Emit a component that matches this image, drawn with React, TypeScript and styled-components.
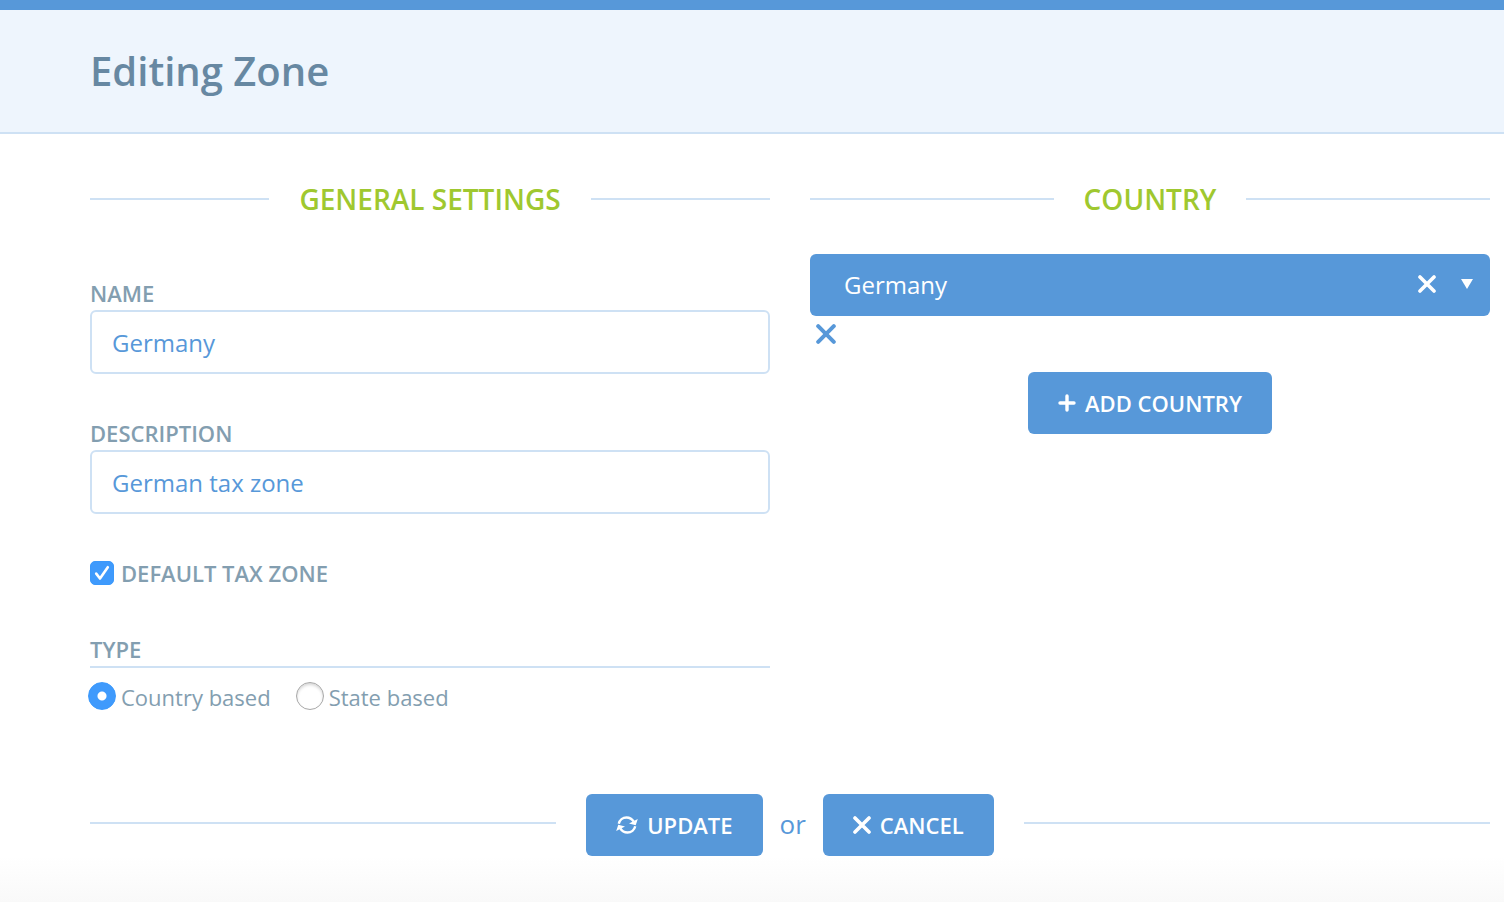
import React, { useState } from "react";
import styled, { createGlobalStyle, css } from "styled-components";

const blue = "#5798d9";
const line = "#cee1f4";
const slate = "#839eb0";
const green = "#9fc82f";

const GlobalStyle = createGlobalStyle`
  *, *::before, *::after { box-sizing: border-box; }
  body {
    margin: 0;
    background: #fff;
    color: ${slate};
    font-family: "Open Sans", "Noto Sans", sans-serif;
    font-size: 24px;
    line-height: 32px;
  }
  button, input, select { font: inherit; }
`;

const Page = styled.div`
  display: flex;
  flex-direction: column;
  min-height: 100vh;
`;

const Header = styled.header`
  padding: 32px 90px;
  background: #eef5fd;
  border-top: 10px solid ${blue};
  border-bottom: 2px solid ${line};
`;

const Title = styled.h1`
  margin: 0;
  color: #6788a2;
  font-size: 40px;
  line-height: 58px;
  font-weight: 600;
`;

const Form = styled.form`
  padding: 44px 14px 0 90px;
`;

const Columns = styled.div`
  display: grid;
  grid-template-columns: 1fr 1fr;
  column-gap: 40px;
`;

const SectionTitle = styled.h2`
  display: flex;
  align-items: center;
  gap: 30px;
  margin: 0;
  color: ${green};
  font-size: 28px;
  line-height: 42px;
  font-weight: 600;
  text-transform: uppercase;

  &::before,
  &::after {
    content: "";
    flex: 1;
    height: 2px;
    background: ${line};
  }
`;

const labelText = css`
  color: ${slate};
  font-size: 22px;
  line-height: 30px;
  font-weight: 600;
  text-transform: uppercase;
`;

const Fields = styled.div`
  display: flex;
  flex-direction: column;
  gap: 44px;
  padding-top: 58px;
`;

const Field = styled.div`
  display: flex;
  flex-direction: column;
`;

const Label = styled.label`
  ${labelText}
  padding-bottom: 2px;
`;

const TextInput = styled.input`
  width: 100%;
  height: 64px;
  padding: 0 20px;
  border: 2px solid ${line};
  border-radius: 6px;
  background: #fff;
  color: ${blue};
  outline: none;
`;

const CheckLabel = styled.label`
  ${labelText}
  display: flex;
  align-items: center;
  gap: 7px;
  padding-bottom: 2px;
`;

const Tick = styled.span`
  display: grid;
  height: 24px;

  > * { grid-area: 1 / 1; }
  svg { pointer-events: none; }
`;

const Checkbox = styled.input`
  appearance: none;
  width: 24px;
  height: 24px;
  margin: 0;
  border: 1px solid #b4b4b4;
  border-radius: 5px;

  &:checked { border-color: #3b99fc; background: #3f9afc; }
  &:not(:checked) + svg { visibility: hidden; }
`;

const RadioGroup = styled.fieldset`
  display: block;
  min-width: 0;
  margin: 0;
  padding: 0;
  border: 0;
`;

const RadioLegend = styled.legend`
  ${labelText}
  width: 100%;
  padding: 0 0 2px;
  border-bottom: 2px solid ${line};
`;

const Radios = styled.div`
  display: flex;
  gap: 25px;
  margin-left: -2px;
  padding-top: 13px;
`;

const RadioLabel = styled.label`
  display: flex;
  align-items: center;
  gap: 5px;
  font-size: 22px;
`;

const Radio = styled.input`
  appearance: none;
  width: 28px;
  height: 28px;
  margin: 0 0 2px;
  border: 1px solid #a8a8a8;
  border-radius: 50%;
  background: #fff;
  box-shadow: inset 0 2px 3px #d8d8d8;

  &:checked {
    border-color: #3b99fc;
    background: radial-gradient(circle, #fff 4px, #3f9afc 5px);
    box-shadow: none;
  }
`;

const CountryList = styled.div`
  display: flex;
  flex-direction: column;
  padding-top: 34px;
`;

const SelectBox = styled.div`
  display: grid;
  grid-template-columns: 1fr auto auto;
  align-items: center;
  height: 62px;
  border-radius: 6px;
  background: ${blue};
  color: #fff;
`;

const Select = styled.select`
  grid-area: 1 / 1 / 2 / 4;
  width: 100%;
  height: 62px;
  padding: 0 100px 0 34px;
  border: 0;
  border-radius: 6px;
  background: transparent;
  color: #fff;
  appearance: none;
  outline: none;
`;

const IconButton = styled.button`
  display: flex;
  padding: 8px 6px;
  border: 0;
  background: none;
  color: ${blue};
  cursor: pointer;
`;

const ClearButton = styled(IconButton)`
  grid-row: 1;
  grid-column: 2;
  padding: 6px 6px 8px;
  color: #fff;
`;

const RemoveButton = styled(IconButton)`
  align-self: flex-start;
`;

const Arrow = styled.svg`
  grid-row: 1;
  grid-column: 3;
  margin: 0 17px 2px 19px;
  pointer-events: none;
`;

const Button = styled.button`
  display: flex;
  align-items: center;
  justify-content: center;
  gap: 9px;
  height: 62px;
  padding: 0 30px;
  border: 0;
  border-radius: 6px;
  background: ${blue};
  color: #fff;
  font-size: 22px;
  font-weight: 600;
  line-height: 32px;
  text-transform: uppercase;
  cursor: pointer;
`;

const AddRow = styled.div`
  display: flex;
  justify-content: center;
  padding-top: 20px;
`;

const Actions = styled.div`
  display: flex;
  align-items: center;
  padding-top: 81px;

  &::before,
  &::after {
    content: "";
    flex: 1;
    height: 2px;
    margin: 0 30px 4px 0;
    background: ${line};
  }
  &::after { margin: 0 0 4px 30px; }
`;

const Or = styled.span`
  padding: 0 17px 2px;
  color: ${blue};
  font-size: 26px;
`;

const BottomShade = styled.div`
  flex: 1;
  min-height: 46px;
  background: linear-gradient(#fff, #f9f9f9);
`;

const Cross = ({ size }: { size: number }) => (
  <svg width={size} height={size} viewBox="0 0 20 20" fill="none" stroke="currentColor" strokeWidth="4" strokeLinecap="round" aria-hidden="true">
    <path d="M2.2 2.2 17.8 17.8M17.8 2.2 2.2 17.8" />
  </svg>
);

const Plus = () => (
  <svg width="18" height="18" viewBox="0 0 18 18" fill="none" stroke="currentColor" strokeWidth="3.4" strokeLinecap="round" aria-hidden="true">
    <path d="M9 2V16M2 9H16" />
  </svg>
);

const Refresh = () => (
  <svg width="22" height="18" viewBox="0 0 22 18" aria-hidden="true">
    <g fill="none" stroke="currentColor" strokeWidth="2.4">
      <path d="M2.8 7.800C3.6 4 6.800 1.500 10.500 1.500c3 0 5.700 1.600 7.200 4.200" />
      <path d="M19.200 10.200C18.400 14 15.200 16.500 11.500 16.500c-3 0-5.700-1.600-7.200-4.200" />
    </g>
    <path fill="currentColor" d="M21.800 2.900 19.700 9.200 13 7.400Z" />
    <path fill="currentColor" d="M.2 15.100 2.300 8.800 9 10.600Z" />
  </svg>
);

export default function App() {
  const [name, setName] = useState("Germany");
  const [description, setDescription] = useState("German tax zone");
  const [isDefault, setIsDefault] = useState(true);
  const [kind, setKind] = useState("country");

  return (
    <Page>
      <GlobalStyle />
      <Header>
        <Title>Editing Zone</Title>
      </Header>
      <Form onSubmit={(e) => e.preventDefault()}>
        <Columns>
          <section>
            <SectionTitle>General Settings</SectionTitle>
            <Fields>
              <Field>
                <Label htmlFor="zone-name">Name</Label>
                <TextInput id="zone-name" value={name} onChange={(e) => setName(e.target.value)} />
              </Field>
              <Field>
                <Label htmlFor="zone-description">Description</Label>
                <TextInput id="zone-description" value={description} onChange={(e) => setDescription(e.target.value)} />
              </Field>
              <CheckLabel>
                <Tick>
                  <Checkbox type="checkbox" checked={isDefault} onChange={(e) => setIsDefault(e.target.checked)} />
                  <svg width="24" height="24" viewBox="0 0 24 24" fill="none" stroke="#fff" strokeWidth="2.6" strokeLinecap="round" strokeLinejoin="round" aria-hidden="true">
                    <path d="M6.200 12.600 10 17.500 17.800 6.200" />
                  </svg>
                </Tick>
                Default Tax Zone
              </CheckLabel>
              <RadioGroup>
                <RadioLegend>Type</RadioLegend>
                <Radios>
                  <RadioLabel>
                    <Radio type="radio" name="kind" checked={kind === "country"} onChange={() => setKind("country")} />
                    Country based
                  </RadioLabel>
                  <RadioLabel>
                    <Radio type="radio" name="kind" checked={kind === "state"} onChange={() => setKind("state")} />
                    State based
                  </RadioLabel>
                </Radios>
              </RadioGroup>
            </Fields>
          </section>
          <section>
            <SectionTitle>Country</SectionTitle>
            <CountryList>
              <SelectBox>
                <Select aria-label="Country" defaultValue="Germany">
                  <option>Germany</option>
                </Select>
                <ClearButton type="button" aria-label="Clear country">
                  <Cross size={18} />
                </ClearButton>
                <Arrow width="12" height="10" viewBox="0 0 12 10" fill="#fff" aria-hidden="true">
                  <path d="M0 0H12L6 10Z" />
                </Arrow>
              </SelectBox>
              <RemoveButton type="button" aria-label="Remove country">
                <Cross size={20} />
              </RemoveButton>
              <AddRow>
                <Button type="button">
                  <Plus />
                  Add Country
                </Button>
              </AddRow>
            </CountryList>
          </section>
        </Columns>
        <Actions>
          <Button type="submit">
            <Refresh />
            Update
          </Button>
          <Or>or</Or>
          <Button type="button">
            <Cross size={18} />
            Cancel
          </Button>
        </Actions>
      </Form>
      <BottomShade />
    </Page>
  );
}
